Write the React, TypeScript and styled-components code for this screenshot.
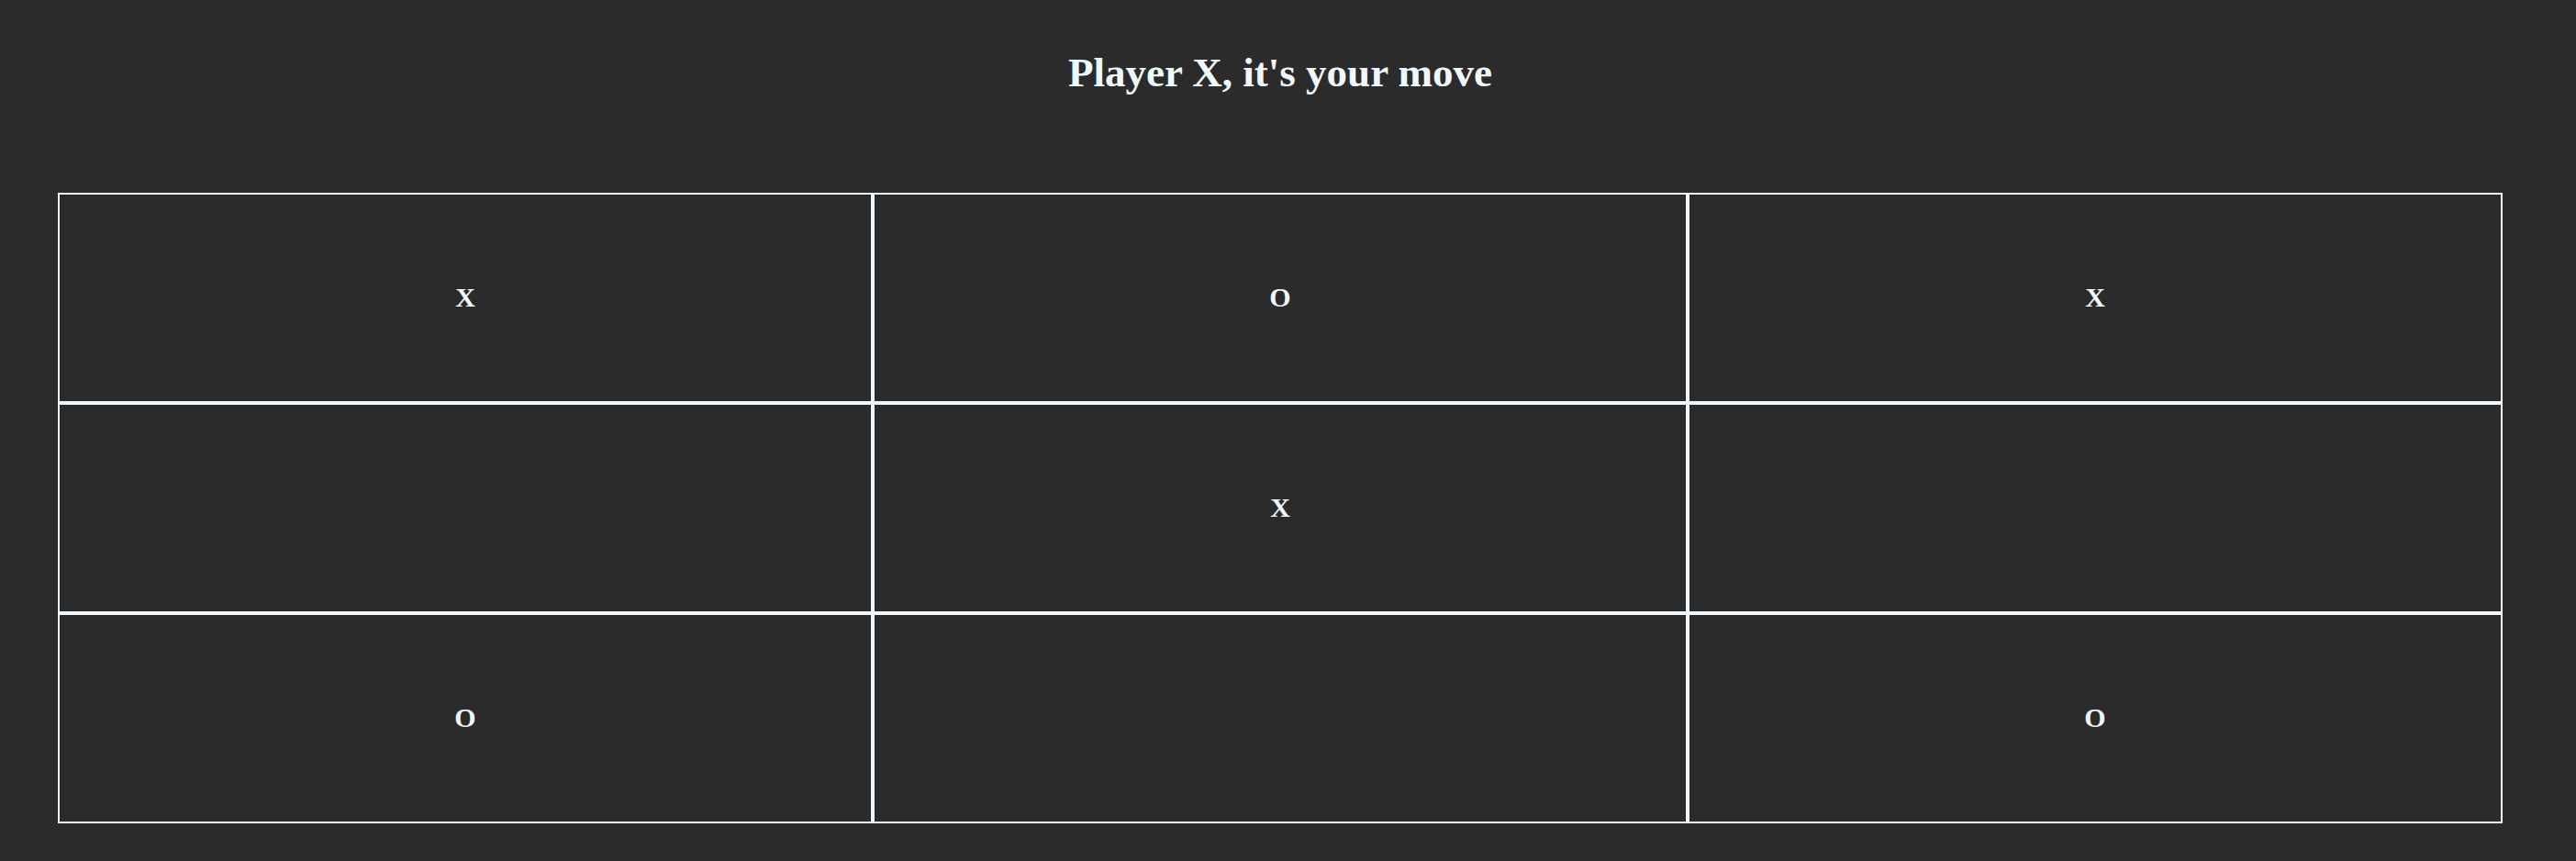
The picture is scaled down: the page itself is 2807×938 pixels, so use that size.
import React from "react";
import styled, { createGlobalStyle } from "styled-components";

const GlobalStyle = createGlobalStyle`
  html, body {
    margin: 0;
    padding: 0;
    background: #2b2b2b;
  }
  body {
    font-family: "Liberation Serif", "Times New Roman", serif;
    color: #f0f8ff;
  }
`;

const Page = styled.main`
  display: flex;
  flex-direction: column;
  align-items: stretch;
  padding: 51px 80px 40px 63px;
`;

const Status = styled.h1`
  margin: 0 0 103px;
  font-size: 45px;
  line-height: 56px;
  font-weight: 700;
  text-align: center;
  color: #f0f8ff;
`;

const Board = styled.div`
  display: grid;
  grid-template-columns: repeat(3, 1fr);
  grid-template-rows: repeat(3, 229px);
`;

const Cell = styled.button<{ $filled: boolean }>`
  box-sizing: border-box;
  display: flex;
  align-items: center;
  justify-content: center;
  margin: 0;
  padding: 0 0 2px;
  background: transparent;
  border: 2px solid #f0f8ff;
  color: #f0f8ff;
  font-family: "Liberation Serif", "Times New Roman", serif;
  font-size: 30px;
  font-weight: 700;
  cursor: ${(p) => (p.$filled ? "default" : "pointer")};
`;

const cells = ["X", "O", "X", "", "X", "", "O", "", "O"];

export default function App() {
  return (
    <>
      <GlobalStyle />
      <Page>
        <Status>Player X, it's your move</Status>
        <Board>
          {cells.map((v, i) => (
            <Cell key={i} $filled={v !== ""}>
              {v}
            </Cell>
          ))}
        </Board>
      </Page>
    </>
  );
}
